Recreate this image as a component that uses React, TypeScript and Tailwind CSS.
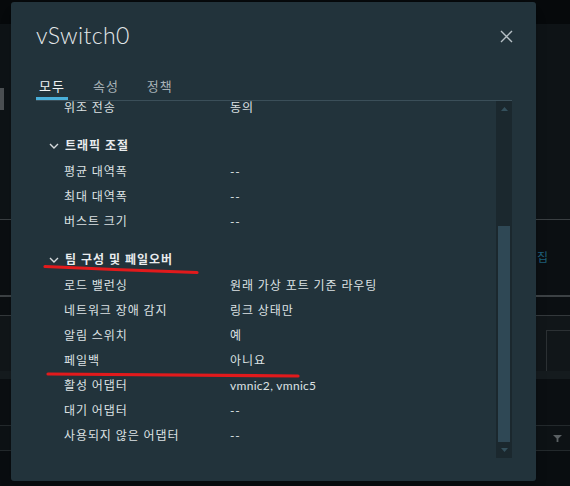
import React from 'react';

type Row = { label: string; value: string };

const sections: { title?: string; rows: Row[] }[] = [
  { rows: [{ label: '위조 전송', value: '동의' }] },
  {
    title: '트래픽 조절',
    rows: [
      { label: '평균 대역폭', value: '--' },
      { label: '최대 대역폭', value: '--' },
      { label: '버스트 크기', value: '--' },
    ],
  },
  {
    title: '팀 구성 및 페일오버',
    rows: [
      { label: '로드 밸런싱', value: '원래 가상 포트 기준 라우팅' },
      { label: '네트워크 장애 감지', value: '링크 상태만' },
      { label: '알림 스위치', value: '예' },
      { label: '페일백', value: '아니요' },
      { label: '활성 어댑터', value: 'vmnic2, vmnic5' },
      { label: '대기 어댑터', value: '--' },
      { label: '사용되지 않은 어댑터', value: '--' },
    ],
  },
];

const font = { fontFamily: "Lato, 'Noto Sans CJK KR', sans-serif" };

const Chevron = () => (
  <svg width="10" height="6" viewBox="0 0 10 6" className="text-[#d6dadc]">
    <path d="M1 1l4 4 4-4" fill="none" stroke="currentColor" strokeWidth="1.4" />
  </svg>
);

const Background = () => (
  <div className="flex h-full w-full flex-col bg-[#0d1215]">
    <div className="h-[24px] bg-[#06090b]" />
    <div className="flex h-[195px] items-start bg-[#0e1316] pt-[64px]">
      <div className="h-[22px] w-[4px] bg-[#4b4f52]" />
    </div>
    <div className="h-px bg-[#3a3f42]" />
    <div className="flex h-[75px] items-center justify-end bg-[#0b0f12] pr-[22px]">
      <span className="text-[12px] text-[#1f5f7a]" style={font}>집</span>
    </div>
    <div className="h-[2px] bg-[#3c4144]" />
    <div className="h-[18px] bg-[#0b0f12]" />
    <div className="h-px bg-[#33383b]" />
    <div className="flex h-[55px] justify-end bg-[#111619] pt-[14px]">
      <div className="h-[50px] w-[24px] border-b border-l border-t border-[#2c3134]" />
    </div>
    <div className="h-[8px] bg-[#151b1e]" />
    <div className="h-[46px] bg-[#0b0f12]" />
    <div className="h-px bg-[#23292c]" />
    <div className="flex h-[24px] items-center justify-end bg-[#0d1215] pr-[8px]">
      <svg width="9" height="9" viewBox="0 0 10 10">
        <path d="M0 1h10L6 5v4H4V5z" fill="#5a6063" />
      </svg>
    </div>
    <div className="h-px bg-[#23292c]" />
    <div className="flex-1 bg-[#090d10]" />
  </div>
);

export default function App() {
  return (
    <div className="relative h-[486px] w-[570px] overflow-hidden" style={font}>
      <Background />

      <div className="absolute left-[11px] top-[2px] flex h-[479px] w-[525px] flex-col rounded-[3px] bg-[#22333b] pl-[25px] pr-[24px] shadow-lg">
        <div className="flex h-[64px] items-start justify-between pt-[18px]">
          <h1 className="text-[23px] font-light leading-[30px] tracking-[0.4px] text-[#e4e8ea]">vSwitch0</h1>
          <svg width="13" height="13" viewBox="0 0 13 13" className="mr-[-1px] mt-[10px]">
            <path d="M1 1l11 11M12 1L1 12" stroke="#b6c0c5" strokeWidth="1.4" />
          </svg>
        </div>

        <div className="mt-[12px] flex gap-[22px] border-b border-[#3b4f59]">
          {['모두', '속성', '정책'].map((t, i) => (
            <div
              key={t}
              className={`relative h-[22px] px-[3px] text-[13px] leading-[16px] tracking-[1px] ${
                i === 0 ? 'text-[#eef1f2]' : 'text-[#a7b1b6]'
              }`}
            >
              {t}
              {i === 0 && <div className="absolute bottom-0 left-0 h-[3px] w-full bg-[#49afd9]" />}
            </div>
          ))}
        </div>

        <div className="flex h-[357px]">
          <div className="flex-1 overflow-hidden">
            <div className="-mt-[6px]">
              {sections.map((s, i) => (
                <div key={i} className="mb-[12px]">
                  {s.title && (
                    <div className="flex h-[27px] items-center pl-[13px]">
                      <Chevron />
                      <span className="ml-[6px] text-[12px] font-bold tracking-[1px] text-[#e9ecee]">{s.title}</span>
                    </div>
                  )}
                  {s.rows.map((r) => (
                    <div
                      key={r.label}
                      className="flex h-[25px] items-center pl-[28px] text-[12px] tracking-[0.9px] text-[#dde2e4]"
                    >
                      <span className="w-[166px] shrink-0">{r.label}</span>
                      <span className={r.value.startsWith('vm') ? 'tracking-[0.3px]' : ''}>{r.value}</span>
                    </div>
                  ))}
                </div>
              ))}
            </div>
          </div>
          <div className="flex w-[16px] flex-col bg-[#1b282e]">
            <div className="flex h-[16px] items-center justify-center">
              <svg width="7" height="4" viewBox="0 0 7 4">
                <path d="M0 4L3.5 0 7 4z" fill="#34505c" />
              </svg>
            </div>
            <div className="flex-1" />
            <div className="mx-[2px] h-[216px] bg-[#2f4855]" />
            <div className="flex h-[16px] items-center justify-center">
              <svg width="7" height="4" viewBox="0 0 7 4">
                <path d="M0 0h7L3.5 4z" fill="#34505c" />
              </svg>
            </div>
          </div>
        </div>
      </div>

      <svg className="pointer-events-none absolute left-0 top-0" width="570" height="486">
        <path d="M45 266.5 Q120 270 197 272.5" fill="none" stroke="#e21a1c" strokeWidth="3.2" strokeLinecap="round" />
        <path d="M48 374 Q170 374.5 298 376" fill="none" stroke="#e21a1c" strokeWidth="3.2" strokeLinecap="round" />
      </svg>
    </div>
  );
}
